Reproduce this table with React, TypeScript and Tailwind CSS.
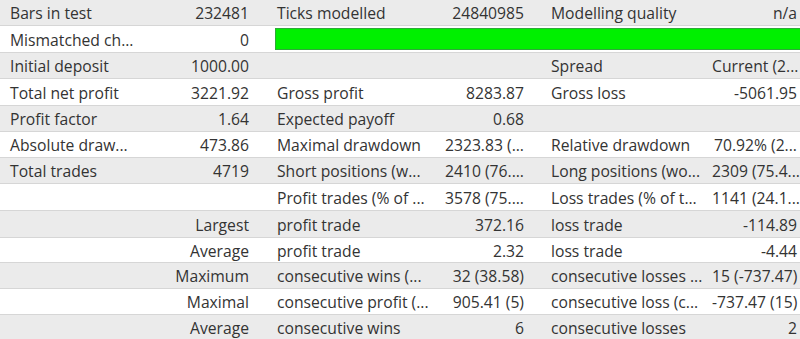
import React from "react";

type Row = string[];

const rows: Row[] = [
  ["Bars in test", "232481", "Ticks modelled", "24840985", "Modelling quality", "n/a"],
  ["Mismatched ch...", "0", "BAR", "", "", ""],
  ["Initial deposit", "1000.00", "", "", "Spread", "Current (2..."],
  ["Total net profit", "3221.92", "Gross profit", "8283.87", "Gross loss", "-5061.95"],
  ["Profit factor", "1.64", "Expected payoff", "0.68", "", ""],
  ["Absolute draw...", "473.86", "Maximal drawdown", "2323.83 (...", "Relative drawdown", "70.92% (2..."],
  ["Total trades", "4719", "Short positions (w...", "2410 (76....", "Long positions (wo...", "2309 (75.4..."],
  ["", "", "Profit trades (% of ...", "3578 (75....", "Loss trades (% of t...", "1141 (24.1..."],
  ["", "Largest", "profit trade", "372.16", "loss trade", "-114.89"],
  ["", "Average", "profit trade", "2.32", "loss trade", "-4.44"],
  ["", "Maximum", "consecutive wins (...", "32 (38.58)", "consecutive losses ...", "15 (-737.47)"],
  ["", "Maximal", "consecutive profit (...", "905.41 (5)", "consecutive loss (c...", "-737.47 (15)"],
  ["", "Average", "consecutive wins", "6", "consecutive losses", "2"],
];

const heights = [
  "h-[26px]",
  "h-[27px]",
  "h-[26px]",
  "h-[27px]",
  "h-[26px]",
  "h-[26px]",
  "h-[26px]",
  "h-[27px]",
  "h-[27px]",
  "h-[25px]",
  "h-[26px]",
  "h-[26px]",
  "h-[26px]",
];

export default function App() {
  return (
    <div
      className="w-[800px] h-[339px] overflow-hidden bg-white text-[15.7px] text-[#333333]"
      style={{ fontFamily: '"Open Sans", "Noto Sans", sans-serif' }}
    >
      {rows.map((r, i) => {
        const bg = i % 2 === 0 ? "bg-[#ebebeb]" : "bg-white";
        if (r[2] === "BAR") {
          return (
            <div
              key={i}
              className={`grid grid-cols-[140px_118px_542px] ${heights[i]} border-b border-[#d6d6d6] items-center ${bg}`}
            >
              <div className="pl-[10px] pt-[3px] whitespace-nowrap overflow-hidden">{r[0]}</div>
              <div className="pr-[9px] pt-[3px] text-right whitespace-nowrap overflow-hidden">{r[1]}</div>
              <div className="pl-[17px] h-full flex items-center overflow-hidden">
                <div className="w-[530px] shrink-0 h-[22px] bg-[#00f000] border border-[#2fa83a]" />
              </div>
            </div>
          );
        }
        return (
          <div
            key={i}
            className={`grid grid-cols-[140px_118px_182px_92px_180px_88px] ${heights[i]} pt-[3px] border-b border-[#d6d6d6] items-center ${bg}`}
          >
            <div className="pl-[10px] whitespace-nowrap overflow-hidden">{r[0]}</div>
            <div className="pr-[9px] text-right whitespace-nowrap overflow-hidden">{r[1]}</div>
            <div className="pl-[19px] whitespace-nowrap overflow-hidden">{r[2]}</div>
            <div className="pr-[8px] text-right whitespace-nowrap overflow-hidden">{r[3]}</div>
            <div className="pl-[19px] whitespace-nowrap overflow-hidden">{r[4]}</div>
            <div className="pr-[3px] text-right whitespace-nowrap overflow-hidden">{r[5]}</div>
          </div>
        );
      })}
    </div>
  );
}
